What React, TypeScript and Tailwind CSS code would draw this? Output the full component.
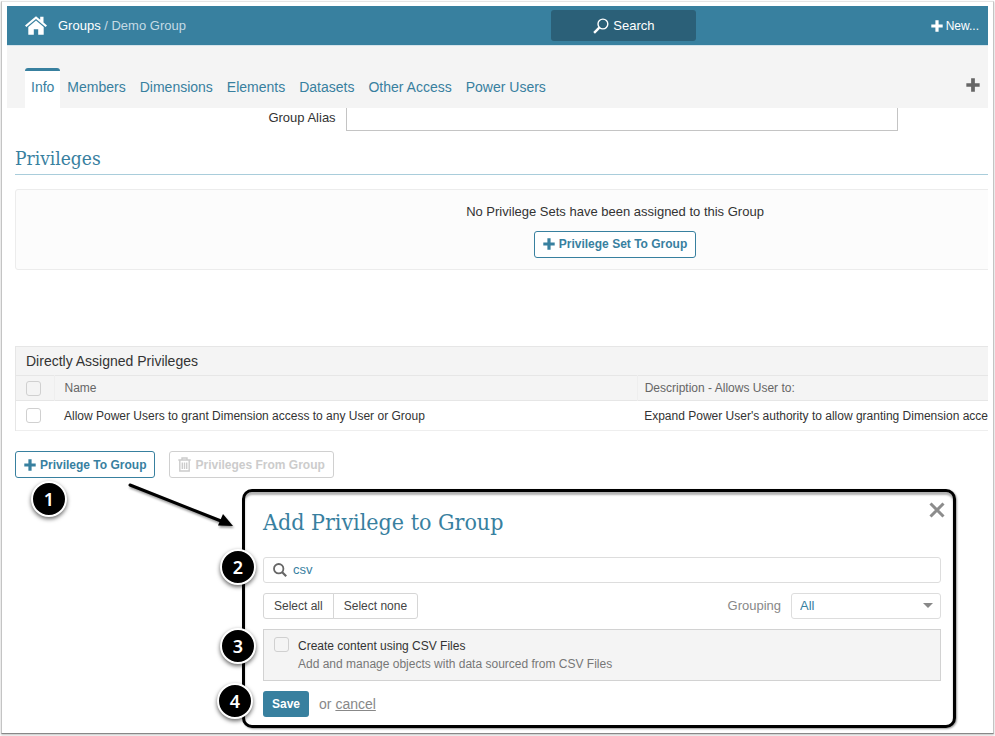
import React, { useState } from "react";

const sans = "font-['Liberation_Sans',Arial,sans-serif]";
const serif = "font-['DejaVu_Serif_Condensed','DejaVu_Serif',serif] [font-stretch:condensed]";
const outlineButton =
  "flex h-[27px] items-center gap-1 rounded-[3px] border bg-white px-2 text-xs font-bold";
const checkbox =
  "block size-[15px] shrink-0 appearance-none rounded-[3px] border border-[#d0d0d0] bg-transparent checked:bg-[#38809f]";

function Plus({ className }: { className: string }) {
  return (
    <svg viewBox="0 0 12 12" className={className} fill="currentColor" aria-hidden="true">
      <path d="M4.4.3h3.2v4.1h4.1v3.2H7.6v4.1H4.4V7.6H.3V4.400h4.100z" />
    </svg>
  );
}

function Home() {
  return (
    <svg viewBox="0 0 22 19" className="h-[19px] w-[22px]" fill="currentColor" aria-hidden="true">
      <path d="M11 .3 0 9.6l1.400 1.500L11 3l9.600 8.100L22 9.600l-3.500-3V.8h-3.300v3z" />
      <path d="M11 4.500 3.300 11v7.700h5.500v-5.500h4.400v5.500h5.500V11z" />
    </svg>
  );
}

function Trash() {
  return (
    <svg viewBox="0 0 13 15" className="h-[15px] w-[13px]" fill="none" stroke="currentColor" strokeWidth="1.4" aria-hidden="true">
      <path d="M.3 3h12.400M4 3V1h5v2M1.800 3v11h9.400V3" />
      <path d="M4.300 5.500v6.500M6.500 5.500v6.500M8.700 5.500v6.500" />
    </svg>
  );
}

function Badge({ n, className }: { n: number; className: string }) {
  return (
    <span
      className={`flex size-9 items-center justify-center rounded-full border-2 border-white bg-black font-['Noto_Sans',sans-serif] text-lg font-semibold text-white shadow-[0_2px_4px_rgba(0,0,0,0.6)] ${className}`}
    >
      {n}
    </span>
  );
}

const tabs = ["Info", "Members", "Dimensions", "Elements", "Datasets", "Other Access", "Power Users"];

function Header() {
  return (
    <header className="flex h-[39px] items-center bg-[#38809f] text-[13px] text-white">
      <nav className="flex w-[55.5%] shrink-0 items-center gap-[11px] pl-[18px]" aria-label="Breadcrumb">
        <a href="#home" aria-label="Home">
          <Home />
        </a>
        <span className="text-[#c5dbe5]">
          <a href="#groups" className="text-white">Groups</a> / Demo Group
        </span>
      </nav>
      <button className="flex h-[31px] w-[145px] items-center justify-center gap-1 rounded-[3px] bg-[#2b6078]">
        <svg viewBox="0 0 16 16" className="size-4" fill="none" stroke="currentColor" aria-hidden="true">
          <circle cx="9.9" cy="6" r="4.9" strokeWidth="1.4" />
          <path d="m6.300 9.700-5.200 5.200" strokeWidth="2.4" />
        </svg>
        Search
      </button>
      <button className="mr-[9px] ml-auto flex items-center gap-[3px] text-xs">
        <Plus className="size-3" />
        New...
      </button>
    </header>
  );
}

function Tabs() {
  return (
    <nav className="flex h-[63px] items-end border-t border-[#d5e4eb] bg-[#f4f4f4] pr-2 pl-[18px] text-sm text-[#38809f]" aria-label="Group sections">
      {tabs.map((tab, i) => (
        <a
          key={tab}
          href={`#${tab}`}
          className={
            i === 0
              ? "mr-[7px] h-10 rounded-t-[3px] border-t-[3px] border-[#38809f] bg-white px-[6px] pt-[6px]"
              : "mr-[14px] h-10 pt-[9px]"
          }
        >
          {tab}
        </a>
      ))}
      <button className="mb-4 ml-auto text-[#666]" aria-label="Add tab">
        <Plus className="size-[14px]" />
      </button>
    </nav>
  );
}

function PrivilegeTable() {
  return (
    <div className="mt-[76px] border-l border-[#e6e6e6]">
      <h3 id="assigned" className="h-[29px] border-t border-[#e6e6e6] bg-[#f4f4f4] pl-[10px] text-sm leading-7 text-[#333]">
        Directly Assigned Privileges
      </h3>
      <div className="overflow-hidden">
        <table aria-labelledby="assigned" className="w-full table-fixed border-collapse text-left text-xs whitespace-nowrap text-[#333]">
          <thead>
            <tr className="h-[25px] border-y border-[#e6e6e6] bg-[#f4f4f4] text-[#666]">
              <th className="w-[38px] border-r border-[#eee] pl-[10px]">
                <input type="checkbox" aria-label="Select all privileges" className={checkbox} />
              </th>
              <th className="w-[60%] border-r border-[#eee] pl-[10px] font-normal">Name</th>
              <th className="pl-[7px] font-normal">Description - Allows User to:</th>
            </tr>
          </thead>
          <tbody>
            <tr className="h-[30px] border-b border-[#eee]">
              <td className="pl-[10px]">
                <input type="checkbox" aria-label="Select this privilege" className={checkbox} />
              </td>
              <td className="pl-[10px]">Allow Power Users to grant Dimension access to any User or Group</td>
              <td className="overflow-hidden pl-[7px]">Expand Power User's authority to allow granting Dimension acce</td>
            </tr>
          </tbody>
        </table>
      </div>
    </div>
  );
}

function AddPrivilegeDialog() {
  const [query, setQuery] = useState("csv");
  return (
    <section
      role="dialog"
      aria-labelledby="dialog-title"
      className="relative mt-[11px] mr-8 ml-[235px] rounded-[10px] border-[3px] border-black bg-white pt-[14px] pr-3 pb-2 pl-[18px] text-[13px] shadow-[inset_0_3px_2px_rgba(0,0,0,0.3),1px_1px_2px_rgba(0,0,0,0.4)]"
    >
      <Badge n={2} className="absolute top-[57px] -left-[25px]" />
      <Badge n={3} className="absolute top-[136px] -left-[25px]" />
      <Badge n={4} className="absolute top-[191px] -left-[28px]" />
      <svg viewBox="0 0 110 54" className="absolute -top-[9px] -left-[118px] h-[54px] w-[110px] drop-shadow-[1px_2px_1px_rgba(0,0,0,0.4)]" aria-hidden="true">
        <path d="m3 2 91 36" stroke="black" strokeWidth="3" strokeLinecap="round" />
        <path d="m106 43-15-.500 5-11.500z" fill="black" />
      </svg>
      <button aria-label="Close" className="absolute top-[10px] right-2 text-[#8c8c8c]">
        <svg viewBox="0 0 16 16" className="size-4" stroke="currentColor" strokeWidth="3" aria-hidden="true">
          <path d="m1.500 1.500 13 13m0-13-13 13" />
        </svg>
      </button>
      <h2 id="dialog-title" className={`${serif} text-[23px] leading-8 text-[#38809f]`}>
        Add Privilege to Group
      </h2>
      <label className="mt-[19px] flex h-[26px] items-center gap-1.5 rounded-[3px] border border-[#ddd] pl-[9px] text-[#666]">
        <svg viewBox="0 0 14 14" className="size-[14px]" fill="none" stroke="currentColor" aria-hidden="true">
          <circle cx="5.700" cy="5.700" r="4.700" strokeWidth="1.800" />
          <path d="m9 9 4.200 4.200" strokeWidth="2.200" />
        </svg>
        <input
          aria-label="Search privileges"
          value={query}
          onChange={(e) => setQuery(e.target.value)}
          className="min-w-0 flex-1 bg-transparent text-[#38809f] outline-none"
        />
      </label>
      <div className="mt-[10px] flex items-center text-[#444]">
        <button className="h-[26px] rounded-l-[3px] border border-[#d6d6d6] px-[10px] text-xs">Select all</button>
        <button className="-ml-px h-[26px] rounded-r-[3px] border border-[#d6d6d6] px-[10px] text-xs">Select none</button>
        <label htmlFor="grouping" className="mr-[10px] ml-auto text-[#888]">Grouping</label>
        <div className="relative">
          <select id="grouping" className="block h-[26px] w-[150px] appearance-none rounded-[3px] border border-[#ddd] bg-white pl-2 text-[#38809f]">
            <option>All</option>
          </select>
          <svg viewBox="0 0 10 5" className="pointer-events-none absolute top-[10px] right-2 h-[5px] w-[10px]" aria-hidden="true">
            <path d="M0 0h10L5 5z" fill="#888" />
          </svg>
        </div>
      </div>
      <label className="mt-[10px] flex h-[52px] items-start gap-[9px] border border-[#d2d2d2] bg-[#f4f4f4] pt-[7px] pl-[10px]">
        <input type="checkbox" className={checkbox} />
        <span className="text-xs leading-[18px] text-[#777]">
          <span className="block text-[#333]">Create content using CSV Files</span>
          Add and manage objects with data sourced from CSV Files
        </span>
      </label>
      <div className="mt-[10px] flex items-center text-sm text-[#888]">
        <button className="mr-[10px] h-[26px] rounded-[3px] bg-[#38809f] px-[9px] text-xs font-bold text-white">Save</button>
        <span>
          or <a href="#cancel" className="underline">cancel</a>
        </span>
      </div>
    </section>
  );
}

export default function App() {
  return (
    <div className={`${sans} min-h-screen bg-white pt-px pr-px pb-[2px] pl-px`}>
      <main className="min-h-[733px] overflow-hidden border border-[#c4c4c4] border-t-[#e4e4e4] border-b-[#888] bg-white pt-1 pr-[5px] pb-[5px] pl-[5px] shadow-[0_1px_2px_rgba(0,0,0,0.25)]">
        <Header />
        <Tabs />
        <div className="flex h-[23px]">
          <label htmlFor="alias" className="w-[33.5%] text-right text-[13px] leading-5 text-[#333]">Group Alias</label>
          <input id="alias" className="mr-[90px] ml-[10px] min-w-0 flex-1 border border-t-0 border-[#c4c4c4] outline-none" />
        </div>
        <div className="overflow-hidden pl-2">
          <h2 className={`${serif} mt-[15px] h-[29px] border-b border-[#a9cddb] text-[19px] leading-6 text-[#38809f]`}>Privileges</h2>
          <div className="mt-[14px] flex h-[81px] min-w-[1200px] flex-col items-center rounded-[3px] border border-[#ececec] bg-[#fcfcfc] pt-3 text-[13px] text-[#333]">
            <p className="mb-[9px]">No Privilege Sets have been assigned to this Group</p>
            <button className={`${outlineButton} border-[#38809f] text-[#38809f]`}>
              <Plus className="size-3" />
              Privilege Set To Group
            </button>
          </div>
          <PrivilegeTable />
          <div className="mt-5 flex gap-[14px]">
            <button className={`${outlineButton} border-[#38809f] text-[#38809f]`}>
              <Plus className="size-3" />
              Privilege To Group
            </button>
            <button disabled className={`${outlineButton} border-[#d0d0d0] text-[#ccc]`}>
              <Trash />
              Privileges From Group
            </button>
          </div>
        </div>
        <div className="relative">
          <Badge n={1} className="absolute -top-2 left-6" />
          <AddPrivilegeDialog />
        </div>
      </main>
    </div>
  );
}
